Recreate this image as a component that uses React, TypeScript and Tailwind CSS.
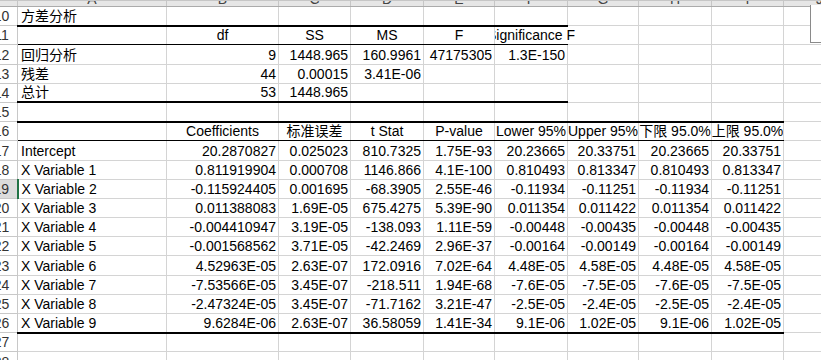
import React from 'react';

// Excel sheet: ANOVA + regression coefficients output
const colW = [
  'w-[32px]',
  'w-[149px]',
  'w-[112px]',
  'w-[72px]',
  'w-[73px]',
  'w-[71px]',
  'w-[73px]',
  'w-[71px]',
  'w-[73px]',
  'w-[72px]',
  'w-[72px]',
];
const letters = ['A', 'B', 'C', 'D', 'E', 'F', 'G', 'H', 'I', 'J'];

type Row = {
  n: number;
  cells: string[];
  head?: boolean;
  line?: 'thick' | 'thin';
  span?: number;
};

const rows: Row[] = [
  { n: 10, cells: ['方差分析'], line: 'thick', span: 6 },
  { n: 11, cells: ['', 'df', 'SS', 'MS', 'F', 'Significance F'], head: true, line: 'thin', span: 6 },
  { n: 12, cells: ['回归分析', '9', '1448.965', '160.9961', '47175305', '1.3E-150'] },
  { n: 13, cells: ['残差', '44', '0.00015', '3.41E-06'] },
  { n: 14, cells: ['总计', '53', '1448.965'], line: 'thick', span: 6 },
  { n: 15, cells: [], line: 'thick', span: 9 },
  {
    n: 16,
    cells: ['', 'Coefficients', '标准误差', 't Stat', 'P-value', 'Lower 95%', 'Upper 95%', '下限 95.0%', '上限 95.0%'],
    head: true,
    line: 'thin',
    span: 9,
  },
  { n: 17, cells: ['Intercept', '20.2870827', '0.025023', '810.7325', '1.75E-93', '20.23665', '20.33751', '20.23665', '20.33751'] },
  { n: 18, cells: ['X Variable 1', '0.811919904', '0.000708', '1146.866', '4.1E-100', '0.810493', '0.813347', '0.810493', '0.813347'] },
  { n: 19, cells: ['X Variable 2', '-0.115924405', '0.001695', '-68.3905', '2.55E-46', '-0.11934', '-0.11251', '-0.11934', '-0.11251'] },
  { n: 20, cells: ['X Variable 3', '0.011388083', '1.69E-05', '675.4275', '5.39E-90', '0.011354', '0.011422', '0.011354', '0.011422'] },
  { n: 21, cells: ['X Variable 4', '-0.004410947', '3.19E-05', '-138.093', '1.11E-59', '-0.00448', '-0.00435', '-0.00448', '-0.00435'] },
  { n: 22, cells: ['X Variable 5', '-0.001568562', '3.71E-05', '-42.2469', '2.96E-37', '-0.00164', '-0.00149', '-0.00164', '-0.00149'] },
  { n: 23, cells: ['X Variable 6', '4.52963E-05', '2.63E-07', '172.0916', '7.02E-64', '4.48E-05', '4.58E-05', '4.48E-05', '4.58E-05'] },
  { n: 24, cells: ['X Variable 7', '-7.53566E-05', '3.45E-07', '-218.511', '1.94E-68', '-7.6E-05', '-7.5E-05', '-7.6E-05', '-7.5E-05'] },
  { n: 25, cells: ['X Variable 8', '-2.47324E-05', '3.45E-07', '-71.7162', '3.21E-47', '-2.5E-05', '-2.4E-05', '-2.5E-05', '-2.4E-05'] },
  { n: 26, cells: ['X Variable 9', '9.6284E-06', '2.63E-07', '36.58059', '1.41E-34', '9.1E-06', '1.02E-05', '9.1E-06', '1.02E-05'], line: 'thick', span: 9 },
  { n: 27, cells: [] },
  { n: 28, cells: [] },
];

function DataCell({ row, ci }: { row: Row; ci: number }) {
  const text = row.cells[ci] ?? '';
  const inLine = row.line && row.span !== undefined && ci < row.span;
  const bottom = inLine ? (row.line === 'thick' ? 'border-b-2 border-b-black' : 'border-b-black') : '';
  const overflowRight = row.n === 11 && ci === 5;

  if (row.head && text) {
    return (
      <td
        className={`p-0 border border-[#d4d4d4] align-bottom pb-px ${bottom} ${
          overflowRight ? 'border-r-white overflow-visible' : 'overflow-hidden'
        }`}
      >
        <div
          className={`flex justify-center whitespace-nowrap leading-[16px] ${
            overflowRight ? '[clip-path:inset(-4px_-100px_-4px_0)]' : 'overflow-hidden'
          }`}
        >
          {text}
        </div>
      </td>
    );
  }

  const align = ci === 0 ? 'text-left pl-[3px]' : 'text-right pr-[2px]';
  return (
    <td
      className={`p-0 border border-[#d4d4d4] align-bottom pb-px overflow-hidden whitespace-nowrap leading-[16px] ${align} ${bottom}`}
    >
      {text}
    </td>
  );
}

export default function App() {
  return (
    <div
      className="relative w-[821px] h-[360px] overflow-hidden bg-white text-[14px] text-black"
      style={{ fontFamily: '"Liberation Sans", "Noto Sans CJK SC", sans-serif' }}
    >
      <table className="table-fixed w-[870px] -ml-[15px] border-collapse">
        <colgroup>
          {colW.map((w, i) => (
            <col key={i} className={w} />
          ))}
        </colgroup>
        <tbody>
          {/* column letters, scrolled so only their feet show */}
          <tr>
            <td className="p-0 bg-[#e6e6e6] border border-[#c6c6c6] border-b-[#ababab]">
              <div className="h-[5px]" />
            </td>
            {letters.map((l) => (
              <td key={l} className="p-0 bg-[#e6e6e6] border border-[#c6c6c6] border-b-[#ababab]">
                <div className="h-[5px] overflow-hidden">
                  <div className="-mt-[10px] leading-[16px] text-center text-[#444]">{l}</div>
                </div>
              </td>
            ))}
          </tr>
          {rows.map((row) => (
            <tr key={row.n} className="h-[19.2px]">
              <td
                className={`p-0 pb-px align-bottom text-center leading-[16px] text-[#333] border border-[#c8c8c8] ${
                  row.n === 19 ? 'bg-[#dcdcdc] border-r-2 border-r-[#217346]' : 'bg-white'
                }`}
              >
                {row.n}
              </td>
              {letters.map((_, ci) => (
                <DataCell key={ci} row={row} ci={ci} />
              ))}
            </tr>
          ))}
        </tbody>
      </table>
      {/* edge of a floating shape on the right */}
      <div className="absolute top-[5px] left-[810px] w-[30px] h-[38px] bg-white border-l border-b border-[#8a8a8a]" />
    </div>
  );
}
